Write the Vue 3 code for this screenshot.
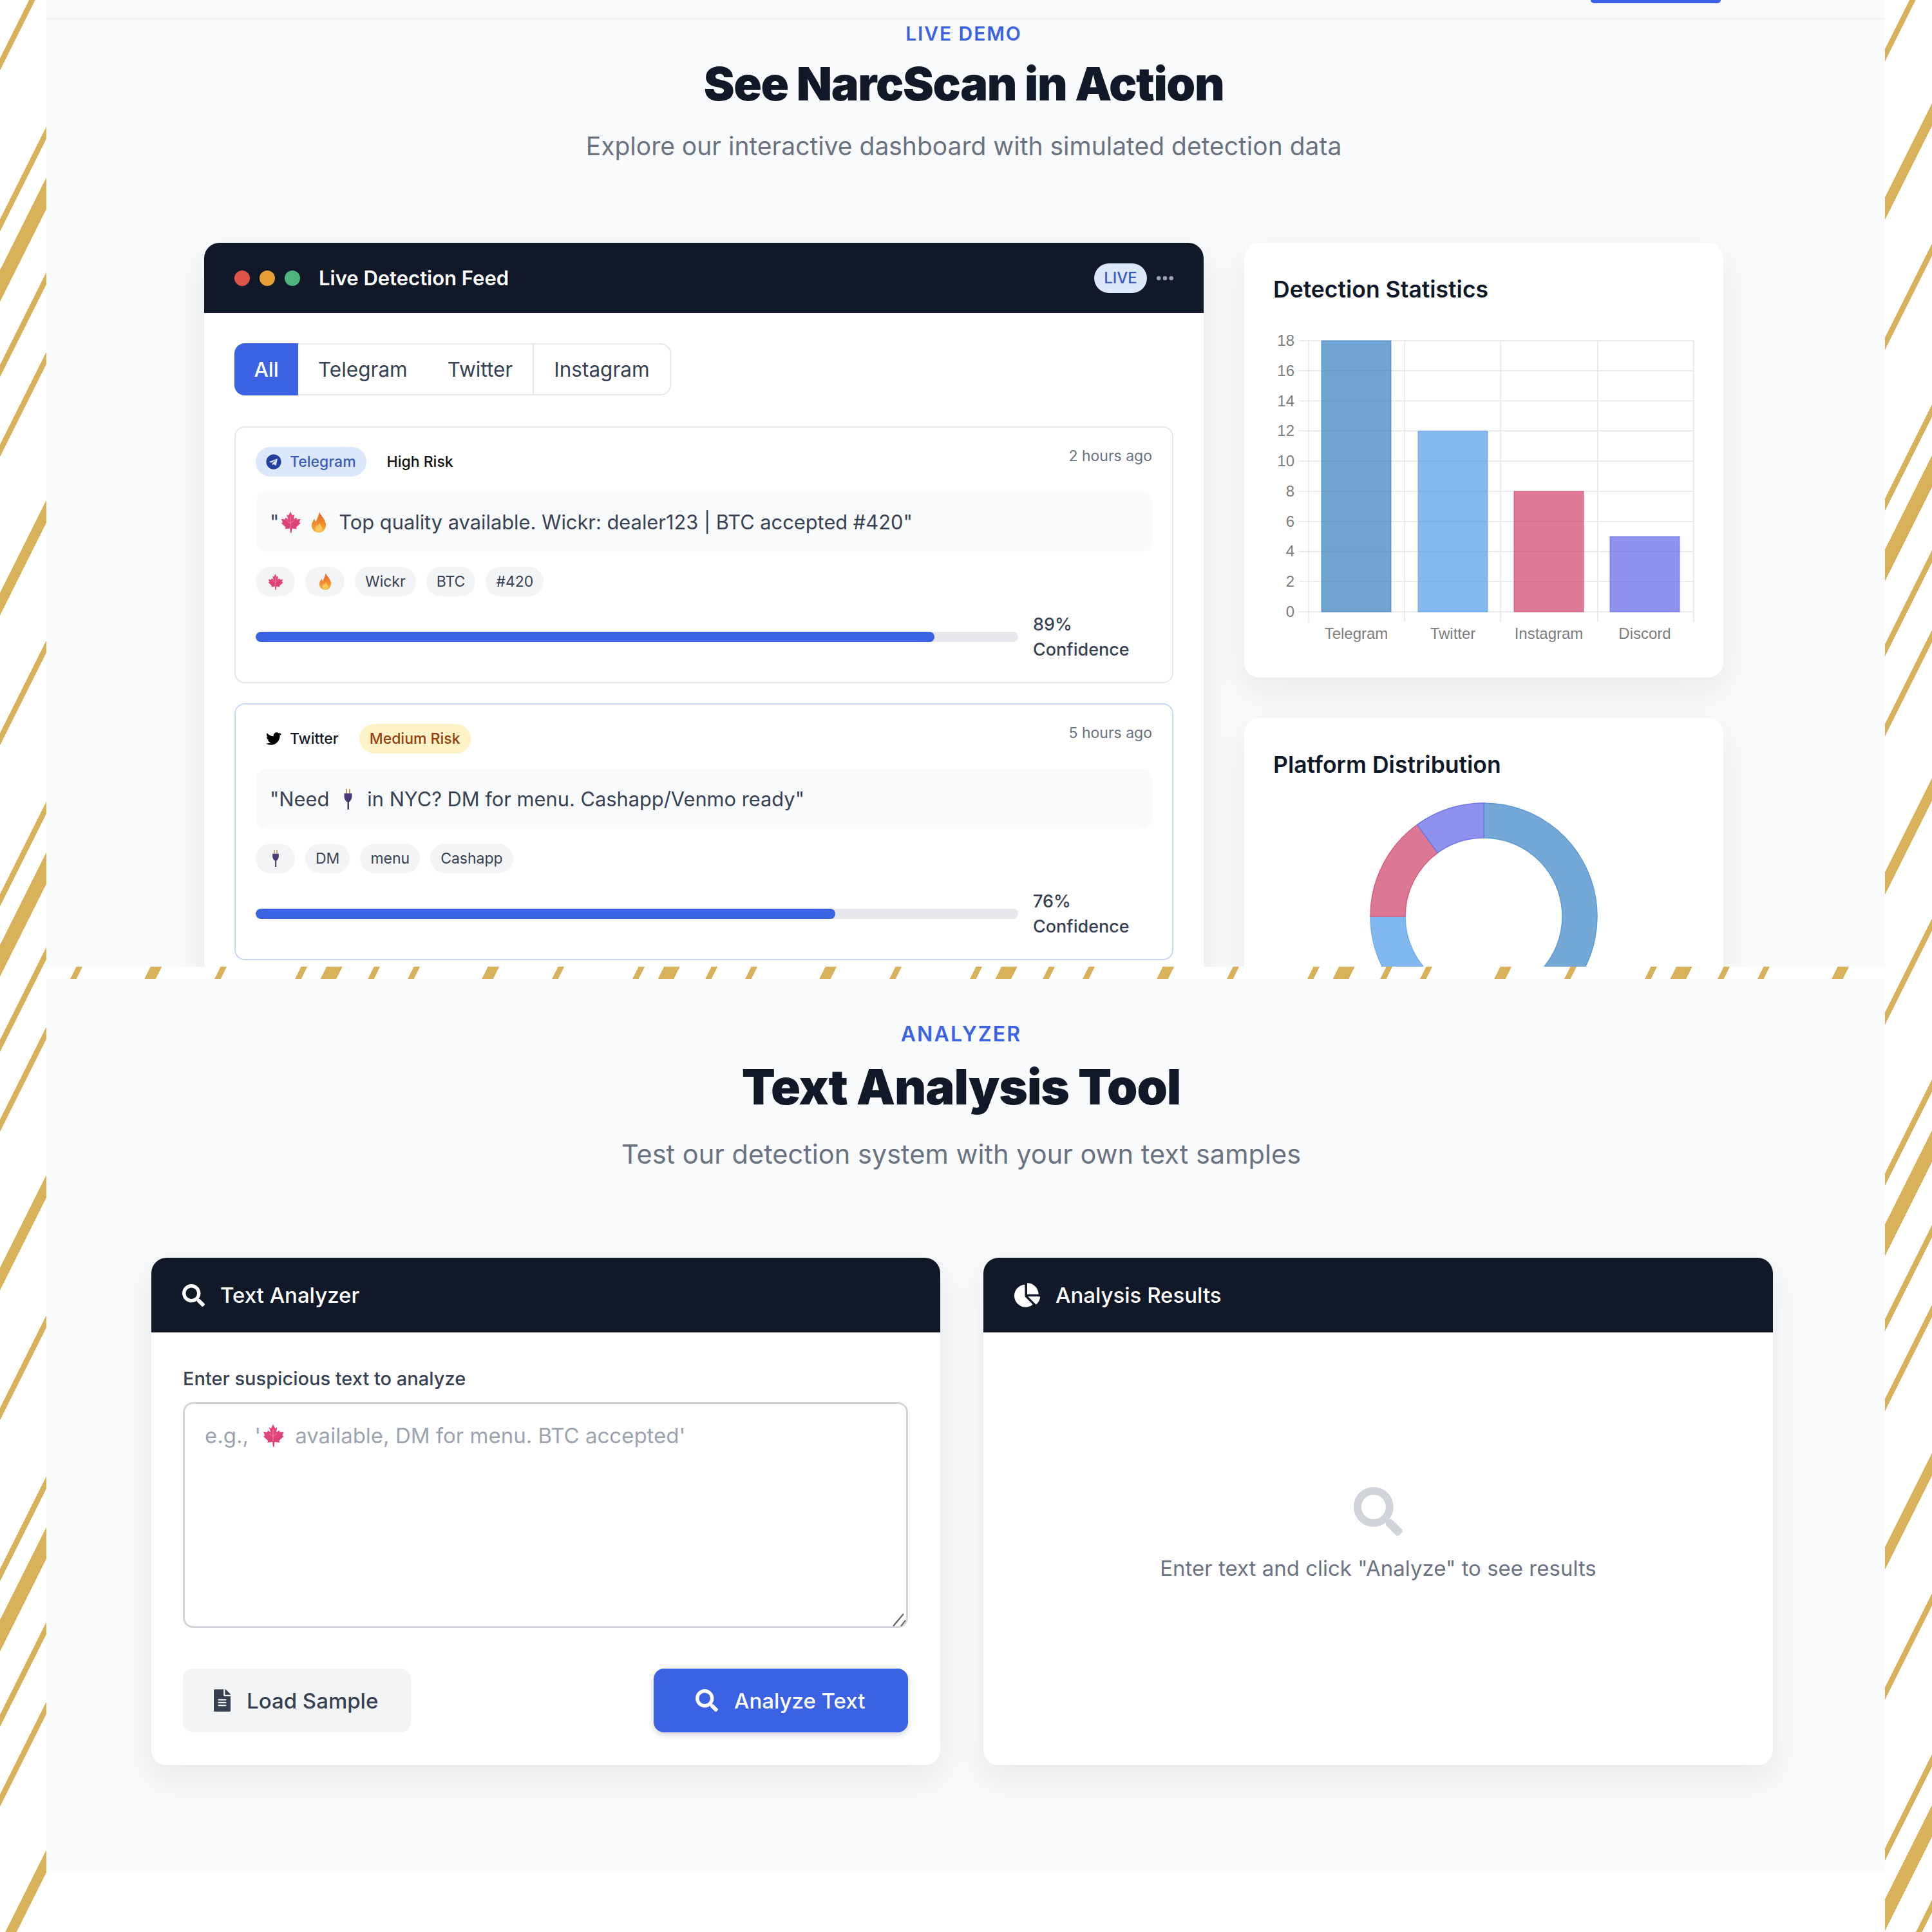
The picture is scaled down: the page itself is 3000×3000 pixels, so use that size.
<template>
  <div class="page">
    <svg class="defs" width="0" height="0" aria-hidden="true">
      <defs>
        <linearGradient id="flameGrad" x1="0" y1="0" x2="0" y2="1">
          <stop offset="0" stop-color="#e8622c" />
          <stop offset="0.55" stop-color="#f08a2c" />
          <stop offset="1" stop-color="#f9b53a" />
        </linearGradient>
        <linearGradient id="leafGrad" x1="0" y1="0" x2="0" y2="1">
          <stop offset="0" stop-color="#e4487c" />
          <stop offset="1" stop-color="#dc3f72" />
        </linearGradient>
        <symbol id="em-leaf" viewBox="0 0 24 24">
          <path fill="url(#leafGrad)" d="M12 1l2 4 2-1-.7 5 2.7-2 .8 2 3.7-.5-1.5 3.5 1.5 1-4.5 4 .5 2-5-.7-.4 4.7h-1.2l-.4-4.7-5 .7.5-2-4.500-4 1.500-1-1.500-3.500 3.700.5.8-2 2.700 2L8 4l2 1z" />
          <path fill="none" stroke="#f08aa8" stroke-width="0.6" d="M12 6v12M12 13l-4-3M12 13l4-3" />
        </symbol>
        <symbol id="em-flame" viewBox="0 0 24 32">
          <path fill="url(#flameGrad)" d="M13 0c1 5 9 10 10 19 .7 7-4.500 13-11 13S0 27 1 19.500c.6-4 3-6 4-9 1 2 1.500 3.500 2.500 4.500C9 11 12 6 13 0z" />
          <path fill="#fbc95a" d="M12.500 17c1 3 5 5 5 9 0 3-2.500 5-5.500 5s-5.500-2-5.500-5c0-3 2-4 3-6 .5 1 1 1.500 1.500 2 .5-1.500 1-3 1.500-5z" />
        </symbol>
        <symbol id="em-plug" viewBox="0 0 14 32">
          <rect x="3.500" y="0" width="2" height="7" fill="#b79a62" />
          <rect x="8.500" y="0" width="2" height="7" fill="#b79a62" />
          <path fill="#4a3a78" d="M1 7h12v5c0 3-2 6-3.500 8h-5C3 18 1 15 1 12z" />
          <rect x="6" y="19" width="2.400" height="13" fill="#3a3450" />
        </symbol>
        <symbol id="fa-search" viewBox="0 0 512 512">
          <path d="M505 442.700L405.300 343c-4.500-4.500-10.600-7-17-7H372c27.600-35.300 44-79.700 44-128C416 93.100 322.900 0 208 0S0 93.100 0 208s93.100 208 208 208c48.300 0 92.700-16.400 128-44v16.300c0 6.400 2.500 12.500 7 17l99.700 99.700c9.400 9.400 24.600 9.400 33.900 0l28.300-28.300c9.400-9.400 9.400-24.600.1-34zM208 336c-70.700 0-128-57.200-128-128 0-70.700 57.200-128 128-128 70.700 0 128 57.200 128 128 0 70.700-57.200 128-128 128z" />
        </symbol>
        <symbol id="fa-pie" viewBox="0 0 544 512">
          <path d="M527.790 288H290.500l158.030 158.030c6.040 6.040 15.980 6.530 22.190.68 38.700-36.460 65.320-85.610 73.130-140.860 1.340-9.460-6.510-17.850-16.060-17.850zm-15.830-64.800C503.720 103.740 408.260 8.280 288.800.04 279.680-.59 272 7.100 272 16.240V240h223.770c9.140 0 16.820-7.680 16.190-16.800zM224 288V50.710c0-9.550-8.390-17.400-17.840-16.060C86.990 51.490-4.100 155.600.14 280.370 4.500 408.510 114.830 513.590 243.030 511.980c50.400-.63 96.970-16.870 135.260-44.030 7.900-5.600 8.420-17.230 1.570-24.080L224 288z" />
        </symbol>
        <symbol id="fa-file" viewBox="0 0 384 512">
          <path d="M224 136V0H24C10.700 0 0 10.700 0 24v464c0 13.300 10.700 24 24 24h336c13.300 0 24-10.700 24-24V160H248c-13.200 0-24-10.800-24-24zm64 236c0 6.600-5.400 12-12 12H108c-6.600 0-12-5.400-12-12v-8c0-6.600 5.400-12 12-12h168c6.600 0 12 5.400 12 12v8zm0-64c0 6.600-5.400 12-12 12H108c-6.600 0-12-5.400-12-12v-8c0-6.600 5.400-12 12-12h168c6.600 0 12 5.400 12 12v8zm0-72v8c0 6.600-5.400 12-12 12H108c-6.600 0-12-5.400-12-12v-8c0-6.600 5.400-12 12-12h168c6.600 0 12 5.400 12 12zm96-114.100v6.100H256V0h6.100c6.400 0 12.500 2.500 17 7l97.900 98c4.500 4.500 7 10.600 7 16.900z" />
        </symbol>
        <symbol id="fa-telegram" viewBox="0 0 496 512">
          <path d="M248 8C111 8 0 119 0 256s111 248 248 248 248-111 248-248S385 8 248 8zm121.800 169.900l-40.700 191.800c-3 13.600-11.100 16.900-22.400 10.500l-62-45.700-29.900 28.800c-3.300 3.300-6.100 6.100-12.500 6.100l4.400-63.100 114.900-103.800c5-4.400-1.100-6.900-7.700-2.500l-142 89.400-61.200-19.100c-13.300-4.200-13.600-13.300 2.800-19.700l239.100-92.200c11.100-4 20.800 2.700 17.200 19.500z" />
        </symbol>
        <symbol id="fa-twitter" viewBox="0 0 512 512">
          <path d="M459.370 151.716c.325 4.548.325 9.097.325 13.645 0 138.720-105.583 298.558-298.558 298.558-59.452 0-114.680-17.219-161.137-47.106 8.447.974 16.568 1.299 25.340 1.299 49.055 0 94.213-16.568 130.274-44.832-46.132-.975-84.792-31.188-98.112-72.772 6.498.974 12.995 1.624 19.818 1.624 9.421 0 18.843-1.300 27.614-3.573-48.081-9.747-84.143-51.980-84.143-102.985v-1.299c13.969 7.797 30.214 12.670 47.431 13.319-28.264-18.843-46.781-51.005-46.781-87.391 0-19.492 5.197-37.360 14.294-52.954 51.655 63.675 129.300 105.258 216.365 109.807-1.624-7.797-2.599-15.918-2.599-24.040 0-57.828 46.782-104.934 104.934-104.934 30.213 0 57.502 12.670 76.670 33.137 23.715-4.548 46.456-13.320 66.599-25.340-7.798 23.715-24.366 43.858-46.782 56.327 21.816-2.308 43.348-8.447 64.091-17.219-15.919 21.816-35.736 41.360-57.828 56.854z" />
        </symbol>
      </defs>
    </svg>

    <section class="sheet demo">
      <div class="topbar"><span class="nav-btn"></span></div>
      <div class="demo-inner">
        <div class="heading">
          <p class="eyebrow">LIVE DEMO</p>
          <h2>See NarcScan in Action</h2>
          <p class="sub">Explore our interactive dashboard with simulated detection data</p>
        </div>

        <div class="demo-grid">
          <div class="feed">
            <div class="feed-head">
              <span class="dot red"></span>
              <span class="dot amber"></span>
              <span class="dot green"></span>
              <span class="feed-title">Live Detection Feed</span>
              <span class="live">LIVE</span>
              <svg class="more" viewBox="0 0 24 6" fill="currentColor">
                <circle cx="3" cy="3" r="3" /><circle cx="12" cy="3" r="3" /><circle cx="21" cy="3" r="3" />
              </svg>
            </div>
            <div class="feed-body">
              <div class="tabs">
                <button class="tab active">All</button>
                <button class="tab plain">Telegram</button>
                <button class="tab">Twitter</button>
                <button class="tab last">Instagram</button>
              </div>

              <article v-for="item in feed" :key="item.time" class="item" :class="{ hovered: item.hovered }">
                <div class="item-top">
                  <span class="platform" :class="item.platformClass">
                    <svg class="pf-icon" fill="currentColor"><use :href="item.icon" /></svg>{{ item.platform }}
                  </span>
                  <span class="risk" :class="item.riskClass">{{ item.risk }}</span>
                  <span class="time">{{ item.time }}</span>
                </div>
                <div class="quote">
                  <template v-for="(part, i) in item.quote" :key="i">
                    <svg v-if="part.em" class="q-em" :class="part.em"><use :href="'#em-' + part.em" /></svg>
                    <span v-else class="q-text">{{ part.t }}</span>
                  </template>
                </div>
                <div class="chips">
                  <span v-for="(c, i) in item.chips" :key="i" class="chip">
                    <svg v-if="c.em" class="c-em" :class="c.em"><use :href="'#em-' + c.em" /></svg>
                    <template v-else>{{ c.t }}</template>
                  </span>
                </div>
                <div class="conf">
                  <div class="track"><div class="fill" :style="{ width: item.conf + '%' }"></div></div>
                  <div class="conf-label">{{ item.conf }}%<br />Confidence</div>
                </div>
              </article>
            </div>
          </div>

          <div class="side">
            <div class="stat-card">
              <h3>Detection Statistics</h3>
              <svg class="bar-chart" width="660" height="490" viewBox="0 -10 660 490">
                <g stroke="#e6e6e6" stroke-width="1.500">
                  <line v-for="t in ticks" :key="t" :x1="39" :x2="652" :y1="tickY(t)" :y2="tickY(t)" />
                  <line v-for="x in gridX" :key="x" :x1="x" :x2="x" y1="10" y2="447" />
                </g>
                <g font-family="'Liberation Sans', Arial, sans-serif" font-size="24" fill="#7d7d7d">
                  <text v-for="t in ticks" :key="t" x="32" :y="tickY(t) + 8" text-anchor="end">{{ t }}</text>
                  <text v-for="b in bars" :key="b.name" :x="b.x + 54" y="473" text-anchor="middle">{{ b.name }}</text>
                </g>
                <rect v-for="b in bars" :key="b.name" :x="b.x" :y="tickY(b.v)" width="108" :height="421 * b.v / 18" :fill="b.fill" :stroke="b.fill" stroke-width="1" />
              </svg>
            </div>
            <div class="stat-card donut-card">
              <h3>Platform Distribution</h3>
              <svg class="donut" width="360" height="360" viewBox="-180 -180 360 360">
                <path v-for="s in slices" :key="s.name" :d="s.d" :fill="s.fill" :stroke="s.stroke" stroke-width="1.500" />
              </svg>
            </div>
          </div>
        </div>
      </div>
    </section>

    <section class="sheet analyzer">
      <div class="heading">
        <p class="eyebrow">ANALYZER</p>
        <h2>Text Analysis Tool</h2>
        <p class="sub">Test our detection system with your own text samples</p>
      </div>

      <div class="tool-grid">
        <div class="tool-card">
          <div class="tool-head">
            <svg class="ic-search" fill="currentColor"><use href="#fa-search" /></svg>
            <span>Text Analyzer</span>
          </div>
          <div class="tool-body">
            <label class="field-label" for="sample">Enter suspicious text to analyze</label>
            <div class="area-wrap">
              <textarea id="sample" class="area"></textarea>
              <div class="placeholder">e.g., '<svg class="ph-em"><use href="#em-leaf" /></svg>available, DM for menu. BTC accepted'</div>
              <svg class="grip" width="22" height="22" viewBox="0 0 22 22" stroke="#5b5b5b" stroke-width="2" fill="none">
                <path d="M2 21L18 2M14 21L21 12" />
              </svg>
            </div>
            <div class="actions">
              <button class="btn ghost">
                <svg class="ic-file" fill="currentColor"><use href="#fa-file" /></svg>Load Sample
              </button>
              <button class="btn primary">
                <svg class="ic-btn-search" fill="currentColor"><use href="#fa-search" /></svg>Analyze Text
              </button>
            </div>
          </div>
        </div>

        <div class="tool-card">
          <div class="tool-head">
            <svg class="ic-pie" fill="currentColor"><use href="#fa-pie" /></svg>
            <span>Analysis Results</span>
          </div>
          <div class="empty">
            <svg class="ic-empty" fill="currentColor"><use href="#fa-search" /></svg>
            <p>Enter text and click "Analyze" to see results</p>
          </div>
        </div>
      </div>
    </section>

    <div class="after"></div>
  </div>
</template>

<script setup>
const feed = [
  {
    platform: "Telegram",
    platformClass: "telegram",
    icon: "#fa-telegram",
    risk: "High Risk",
    riskClass: "high",
    time: "2 hours ago",
    quote: [{ t: '"' }, { em: "leaf" }, { em: "flame" }, { t: "Top quality available. Wickr: dealer123 | BTC accepted #420\"" }],
    chips: [{ em: "leaf" }, { em: "flame" }, { t: "Wickr" }, { t: "BTC" }, { t: "#420" }],
    conf: 89,
  },
  {
    platform: "Twitter",
    platformClass: "twitter",
    icon: "#fa-twitter",
    risk: "Medium Risk",
    riskClass: "medium",
    time: "5 hours ago",
    hovered: true,
    quote: [{ t: '"Need' }, { em: "plug" }, { t: 'in NYC? DM for menu. Cashapp/Venmo ready"' }],
    chips: [{ em: "plug" }, { t: "DM" }, { t: "menu" }, { t: "Cashapp" }],
    conf: 76,
  },
];

const ticks = [18, 16, 14, 12, 10, 8, 6, 4, 2, 0];
const gridX = [54, 203, 352, 503, 652];
const bars = [
  { name: "Telegram", v: 18, x: 74, fill: "rgba(54,125,190,0.7)" },
  { name: "Twitter", v: 12, x: 224, fill: "rgba(78,155,232,0.7)" },
  { name: "Instagram", v: 8, x: 373, fill: "rgba(208,60,105,0.68)" },
  { name: "Discord", v: 5, x: 522, fill: "rgba(88,96,232,0.68)" },
];

function tickY(v) {
  return 10 + (421 * (18 - v)) / 18;
}

function arc(a0, a1, r0, r1) {
  const p = (a, r) => {
    const t = (a * Math.PI) / 180;
    return `${(r * Math.sin(t)).toFixed(2)} ${(-r * Math.cos(t)).toFixed(2)}`;
  };
  const large = a1 - a0 > 180 ? 1 : 0;
  return `M${p(a0, r1)}A${r1} ${r1} 0 ${large} 1 ${p(a1, r1)}L${p(a1, r0)}A${r0} ${r0} 0 ${large} 0 ${p(a0, r0)}Z`;
}

const slices = [
  { name: "Telegram", d: arc(0, 162, 122, 176), fill: "#74a8d6", stroke: "#5f9bd0" },
  { name: "Twitter", d: arc(162, 270, 122, 176), fill: "#82b8f0", stroke: "#74aee8" },
  { name: "Instagram", d: arc(270, 324, 122, 176), fill: "#dd7894", stroke: "#d2607f" },
  { name: "Discord", d: arc(324, 360, 122, 176), fill: "#8d92ef", stroke: "#6d74e6" },
];
</script>

<style>
body {
  margin: 0;
}
</style>

<style scoped>
.page {
  width: 3000px;
  height: 3000px;
  display: flex;
  flex-direction: column;
  overflow: hidden;
  font-family: Inter, "Liberation Sans", sans-serif;
  background: #fff repeating-linear-gradient(
    116.565deg,
    #fff 0 40.2px,
    #d8b25a 40.7px 48.7px,
    #fff 49.2px 152px,
    #d8b25a 152.5px 160.5px,
    #fff 161px 187.3px,
    #d8b25a 187.8px 209.3px,
    #fff 209.8px 253.1px,
    #d8b25a 253.6px 261.6px,
    #fff 262.1px 308.5px,
    #d8b25a 309px 317px,
    #fff 317.5px 411.4px,
    #d8b25a 411.9px 427.1px,
    #fff 427.6px 468.66px
  );
}

.defs {
  position: absolute;
}

.sheet {
  margin: 0 73px 0 72px;
  background: #f9fafb;
  overflow: hidden;
  flex: none;
}

.demo {
  height: 1501px;
}

.analyzer {
  height: 1387px;
  margin-top: 19px;
  padding-top: 68px;
  box-sizing: border-box;
}

.after {
  flex: 1;
  margin: 0 73px 0 72px;
  background: #fff;
}

.topbar {
  height: 28px;
  border-bottom: 2px solid #f0f1f3;
  display: flex;
  justify-content: flex-end;
  padding-right: 255px;
}

.nav-btn {
  width: 202px;
  height: 5px;
  background: #3b62e3;
  border-radius: 0 0 8px 8px;
}

.demo-inner {
  width: 2359px;
  margin-left: 245px;
}

.heading {
  text-align: center;
}

.demo .heading {
  padding-top: 4px;
}

.eyebrow {
  margin: 0;
  font-size: 30px;
  line-height: 36px;
  font-weight: 600;
  letter-spacing: 1.9px;
  color: #3b62e3;
}

h2 {
  margin: 17px 0 0;
  font-size: 72px;
  line-height: 86px;
  font-weight: 900;
  letter-spacing: -1.4px;
  color: #111827;
}

.sub {
  margin: 30px 0 0;
  font-size: 39px;
  line-height: 48px;
  color: #6b7280;
}

.demo-grid {
  display: grid;
  grid-template-columns: 1552px 744px;
  gap: 63px;
  margin-top: 126px;
  align-items: start;
}

.feed {
  background: #fff;
  border-radius: 24px;
  box-shadow: 0 20px 50px rgba(17, 24, 39, 0.08);
}

.feed-head {
  height: 109px;
  background: #111827;
  border-radius: 24px 24px 0 0;
  display: flex;
  align-items: center;
  padding: 0 47px;
  color: #fff;
}

.dot {
  width: 24px;
  height: 24px;
  border-radius: 50%;
  margin-right: 15px;
}

.red {
  background: #e0534b;
}

.amber {
  background: #e8a035;
}

.green {
  background: #4fb37f;
}

.feed-title {
  margin-left: 14px;
  font-size: 31px;
  font-weight: 600;
  flex: 1;
}

.live {
  width: 82px;
  height: 46px;
  line-height: 46px;
  text-align: center;
  border-radius: 23px;
  background: #dbe7fb;
  color: #3b5bb5;
  font-size: 24px;
  font-weight: 500;
}

.more {
  width: 26px;
  height: 8px;
  margin-left: 15px;
  color: #9ca3af;
}

.feed-body {
  padding: 47px;
}

.tabs {
  display: inline-flex;
  height: 81px;
  border: 2px solid #e5e7eb;
  border-radius: 16px;
  box-sizing: border-box;
}

.tab {
  font: inherit;
  font-size: 31.500px;
  color: #374151;
  background: #fff;
  border: 0;
  border-right: 2px solid #e5e7eb;
  padding: 0 31px;
}

.tab.plain {
  border-right: 0;
}

.tab.active {
  margin: -2px 0 -2px -2px;
  width: 99px;
  padding: 0;
  color: #fff;
  background: #3b62e3;
  border: 0;
  border-radius: 16px 0 0 16px;
  font-weight: 500;
}

.tab.last {
  border-right: 0;
  border-radius: 0 16px 16px 0;
}

.item {
  border: 2px solid #e5e7eb;
  border-radius: 16px;
  padding: 30px 31px 0;
  height: 399px;
  box-sizing: border-box;
  margin-top: 31px;
}

.item.hovered {
  border-color: #c6d8f6;
}

.tabs + .item {
  margin-top: 48px;
}

.item-top {
  display: flex;
  align-items: center;
  height: 46px;
}

.platform,
.risk {
  display: inline-flex;
  align-items: center;
  height: 46px;
  padding: 0 16px;
  border-radius: 23px;
  font-size: 23px;
  font-weight: 500;
}

.platform {
  margin-right: 16px;
}

.telegram {
  background: #dbe7fb;
  color: #3b5bb5;
}

.twitter {
  color: #111827;
}

.high {
  color: #111;
}

.medium {
  background: #fef3c7;
  color: #92400e;
}

.pf-icon {
  width: 24px;
  height: 24px;
  margin-right: 13px;
}

.telegram .pf-icon {
  color: #243f9e;
}

.twitter .pf-icon {
  color: #000;
}

.time {
  margin-left: auto;
  font-size: 23px;
  color: #6b7280;
  align-self: flex-start;
}

.quote {
  display: flex;
  align-items: center;
  height: 93px;
  margin-top: 24px;
  padding: 0 22px;
  background: #f9fafb;
  border-radius: 16px;
  font-size: 30.800px;
  color: #374151;
}

.q-em {
  flex: none;
}

.q-em.leaf {
  width: 36px;
  height: 36px;
}

.q-em.flame {
  width: 26px;
  height: 32px;
  margin: 0 18px 0 13px;
}

.q-em.plug {
  width: 17px;
  height: 32px;
  margin: 0 21px;
}

.chips {
  display: flex;
  gap: 16px;
  margin-top: 23px;
}

.chip {
  display: inline-flex;
  align-items: center;
  justify-content: center;
  height: 46px;
  min-width: 29px;
  padding: 0 16px;
  border-radius: 23px;
  background: #f3f4f6;
  font-size: 23px;
  color: #374151;
}

.c-em.leaf {
  width: 27px;
  height: 27px;
}

.c-em.flame {
  width: 22px;
  height: 26px;
}

.c-em.plug {
  width: 14px;
  height: 26px;
}

.conf {
  display: flex;
  align-items: center;
  gap: 23px;
  margin-top: 24px;
}

.track {
  flex: none;
  width: 1184px;
  height: 16px;
  border-radius: 8px;
  background: #e5e7eb;
  overflow: hidden;
}

.fill {
  height: 100%;
  border-radius: 8px;
  background: #3b62e3;
}

.conf-label {
  font-size: 27px;
  line-height: 39px;
  font-weight: 500;
  color: #374151;
}

.side {
  display: flex;
  flex-direction: column;
  gap: 63px;
}

.stat-card {
  background: #fff;
  border-radius: 24px;
  box-shadow: 0 20px 50px rgba(17, 24, 39, 0.07);
  padding: 50px 46px 0;
  height: 675px;
  box-sizing: border-box;
}

h3 {
  margin: 0 0 0 -1px;
  font-size: 35.500px;
  line-height: 46px;
  font-weight: 600;
  color: #111827;
}

.bar-chart {
  display: block;
  margin: 36px 0 0;
}

.donut-card {
  height: 600px;
}

.donut {
  display: block;
  margin: 32px auto 0;
}

.tool-grid {
  display: grid;
  grid-template-columns: 1225px 1226px;
  gap: 67px;
  margin: 137px 0 0 163px;
}

.analyzer .heading {
  width: 2841px;
}

.analyzer .eyebrow {
  font-size: 32px;
  letter-spacing: 2.1px;
}

.analyzer h2 {
  margin-top: 20px;
  font-size: 76px;
  letter-spacing: -1.1px;
}

.analyzer .sub {
  margin-top: 38px;
  font-size: 41.500px;
}

.tool-card {
  background: #fff;
  border-radius: 24px;
  height: 788px;
  box-shadow: 0 20px 50px rgba(17, 24, 39, 0.08);
  display: flex;
  flex-direction: column;
}

.tool-head {
  height: 116px;
  flex: none;
  display: flex;
  align-items: center;
  background: #111827;
  border-radius: 24px 24px 0 0;
  padding: 0 48px;
  color: #fff;
  font-size: 33px;
  font-weight: 500;
}

.ic-search {
  width: 35px;
  height: 35px;
  margin-right: 24px;
}

.ic-pie {
  width: 40px;
  height: 38px;
  margin-right: 24px;
}

.tool-body {
  padding: 54px 50px 0 49px;
}

.field-label {
  display: block;
  font-size: 29px;
  line-height: 36px;
  font-weight: 500;
  color: #374151;
}

.area-wrap {
  position: relative;
  margin-top: 18px;
}

.area {
  display: block;
  width: 100%;
  height: 351px;
  box-sizing: border-box;
  border: 3px solid #d1d5db;
  border-radius: 16px;
  background: #fff;
  resize: none;
  outline: none;
}

.placeholder {
  position: absolute;
  left: 34px;
  top: 32px;
  display: flex;
  align-items: center;
  font-size: 33px;
  line-height: 40px;
  color: #9ca3af;
  pointer-events: none;
}

.ph-em {
  width: 38px;
  height: 38px;
  margin: 0 15px 0 0;
}

.grip {
  position: absolute;
  right: 3px;
  bottom: 2px;
}

.actions {
  display: flex;
  justify-content: space-between;
  margin-top: 63px;
}

.btn {
  display: inline-flex;
  align-items: center;
  height: 99px;
  border: 0;
  border-radius: 16px;
  font: inherit;
  font-size: 33px;
  font-weight: 500;
}

.ghost {
  width: 354px;
  padding: 0 0 0 48px;
  background: #f3f4f6;
  color: #374151;
}

.ic-file {
  width: 26px;
  height: 35px;
  margin-right: 25px;
}

.primary {
  width: 395px;
  padding: 0 0 0 65px;
  background: #3b62e3;
  color: #fff;
  box-shadow: 0 4px 10px rgba(17, 24, 39, 0.18);
}

.ic-btn-search {
  width: 35px;
  height: 35px;
  margin-right: 25px;
}

.empty {
  flex: 1;
  display: flex;
  flex-direction: column;
  align-items: center;
  justify-content: center;
  padding-bottom: 46px;
  color: #6b7280;
}

.ic-empty {
  width: 76px;
  height: 76px;
  color: #d1d5db;
}

.empty p {
  margin: 30px 0 0;
  font-size: 33px;
}
</style>
